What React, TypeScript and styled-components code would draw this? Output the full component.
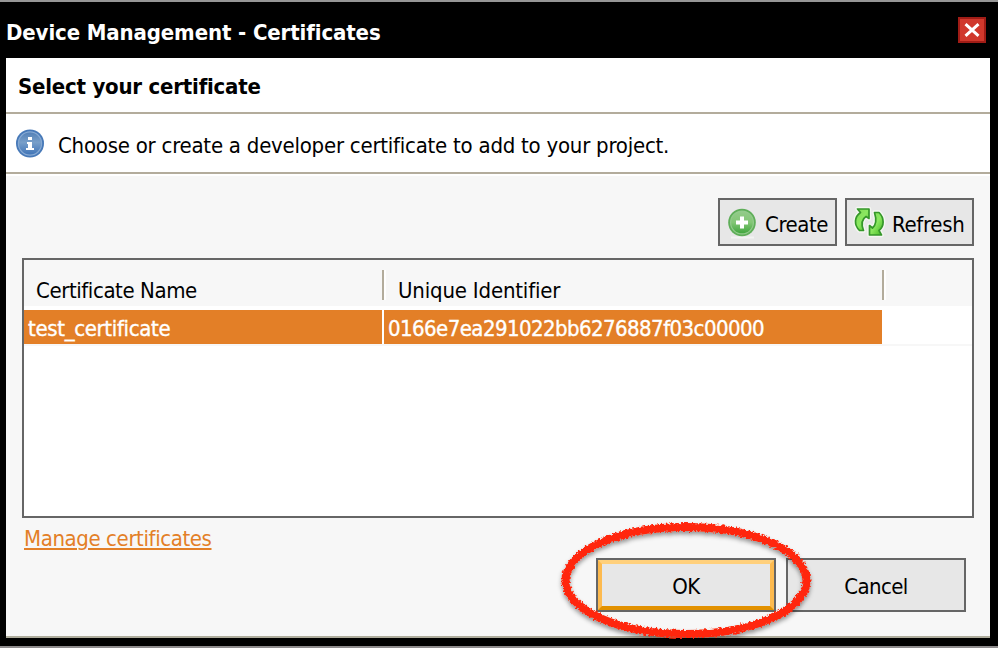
import React from "react";
import styled, { createGlobalStyle, css } from "styled-components";

const GlobalStyle = createGlobalStyle`
  * { box-sizing: border-box; }
  body { margin: 0; background: #000; }
`;

const Window = styled.div`
  position: relative;
  display: flex;
  flex-direction: column;
  width: 998px;
  height: 648px;
  background: #000;
  border-top: 2px solid #969696;
  border-bottom: 2px solid #8e8b8c;
  padding: 0 8px 8px 6px;
  font-family: "DejaVu Sans Condensed", "DejaVu Sans", sans-serif;
  font-stretch: condensed;
  font-size: 22px;
  line-height: 26px;
  color: #000;
  overflow: hidden;
`;

const Label = styled.span<{ $track?: number }>`
  white-space: nowrap;
  letter-spacing: ${(p) => p.$track ?? -0.6}px;
`;

const TitleBar = styled.header`
  display: flex;
  justify-content: space-between;
  height: 56px;
  padding: 18px 0 0;
  color: #fff;
  font-weight: 700;
`;

const CloseButton = styled.button`
  display: flex;
  align-items: center;
  justify-content: center;
  width: 28px;
  height: 26px;
  margin: -3px 4px 0 0;
  padding: 0;
  border: 2px solid #a01c16;
  background: #d0382c;
`;

const Panel = styled.main`
  display: flex;
  flex-direction: column;
  height: 580px;
  background: #f7f7f7;
  border-bottom: 2px solid #aeac9c;
`;

const Heading = styled.h1`
  height: 56px;
  margin: 0;
  padding: 16px 12px 0;
  font-size: 22px;
  font-weight: 700;
  background: #fff;
  border-bottom: 2px solid #b3ac9c;
`;

const Notice = styled.div`
  display: flex;
  height: 60px;
  padding: 15px 10px 0;
  gap: 14px;
  background: #fff;
  border-bottom: 2px solid #b3ac9c;

  span { padding-top: 4px; }
`;

const Content = styled.section`
  display: flex;
  flex-direction: column;
  flex: 1;
  border-top: 2px solid #fff;
  padding: 22px 16px 0;
`;

const Toolbar = styled.div`
  display: flex;
  justify-content: flex-end;
  gap: 8px;
  height: 48px;
`;

const buttonBase = css`
  display: flex;
  padding: 0;
  border: 2px solid #666;
  background: #e7e7e7;
  color: #000;
  font: inherit;
`;

const ToolButton = styled.button<{ $width: number }>`
  ${buttonBase}
  width: ${(p) => p.$width}px;
  padding: 8px 0 0 8px;
  gap: 8px;

  svg { flex: none; }
  span { padding-top: 4px; }
`;

const Table = styled.div`
  height: 260px;
  margin-top: 12px;
  border: 2px solid #666;
  background: #fff;
`;

const columns = css`
  display: grid;
  grid-template-columns: 360px 500px 1fr;
`;

const TableHead = styled.div`
  ${columns}
  height: 46px;
  padding-top: 10px;
  background: #f7f7f7;
`;

const HeadCell = styled.div`
  height: 30px;
  padding: 8px 0 0 12px;
  border-right: 2px solid #b3ac9c;
  box-shadow: 2px 0 0 #fff;

  & + & { padding-left: 14px; }
`;

const TableRow = styled.div`
  ${columns}
  height: 40px;
  padding-top: 4px;
  border-bottom: 2px solid #f7f7f7;
  color: #fff;
`;

const Cell = styled.div`
  height: 34px;
  padding: 6px 0 0 4px;
  margin-right: 2px;
  background: #e37f27;
  -webkit-text-stroke: 0.35px #fff;

  & + & { margin-right: 2px; }
`;

const ManageLink = styled.a`
  align-self: flex-start;
  height: 26px;
  margin: 8px 0 0 2px;
  color: #e37f27;
  text-decoration: underline;
  text-decoration-thickness: 1.5px;
  text-underline-offset: 2px;
  text-decoration-skip-ink: auto;
`;

const Footer = styled.footer`
  display: flex;
  justify-content: flex-end;
  gap: 10px;
  margin: 6px 8px 0 0;
`;

const DialogButton = styled.button<{ $primary?: boolean }>`
  ${buttonBase}
  width: 180px;
  height: 54px;
  justify-content: center;
  align-items: center;

  ${(p) =>
    p.$primary &&
    css`
      > div {
        border: 4px solid;
        border-color: #ffd07c #fdba4f #e29100 #fdba4f;
      }
    `}
`;

const ButtonFace = styled.div`
  display: flex;
  align-items: center;
  justify-content: center;
  width: 176px;
  height: 50px;
  padding-top: 4px;
`;

const Marker = styled.svg`
  position: absolute;
  left: 548px;
  top: 506px;
  pointer-events: none;
`;

const InfoIcon = () => (
  <svg width="28" height="30" viewBox="0 0 28 30">
    <defs>
      <linearGradient id="info" x2="0" y2="1">
        <stop stopColor="#527fb6" />
        <stop offset=".45" stopColor="#789fc9" />
        <stop offset="1" stopColor="#3e73b7" />
      </linearGradient>
    </defs>
    <circle cx="14" cy="14.5" r="14" fill="#4779b8" />
    <circle cx="14" cy="14.5" r="11.6" fill="url(#info)" stroke="#86a9d3" strokeWidth="1.2" />
    <path d="M12 8h4v3h-4zM11 13h5v6h2v2h-8v-2h2v-4h-1z" fill="#fff" />
  </svg>
);

const CreateIcon = () => (
  <svg width="29" height="31" viewBox="0 0 29 31">
    <defs>
      <linearGradient id="plus" x2="0" y2="1">
        <stop stopColor="#94cb8a" />
        <stop offset=".5" stopColor="#82c675" />
        <stop offset="1" stopColor="#3da43b" />
      </linearGradient>
    </defs>
    <path d="M3 29.5h23" stroke="#f3f3f3" strokeWidth="2" />
    <circle cx="14" cy="14.5" r="13.8" fill="#5fae59" />
    <circle cx="14" cy="14.5" r="11.4" fill="url(#plus)" stroke="#93cb8c" strokeWidth="1.2" />
    <path d="M14 8.500v12M8 14.500h12" stroke="#fff" strokeWidth="4" />
  </svg>
);

const LEFT_ARROW =
  "M2.500 1H14V10.500L11 8.500C7 11 6 16 8.500 22.500H4.500C-1 17-1 9 5.500 4.500Z";
const RIGHT_ARROW =
  "M19.500 4.500H24C29.500 10 29.500 18 24 22.500L26.500 27H14.500V17.500L17.500 20C21 17 21.500 11 19.500 4.500Z";

const RefreshIcon = () => (
  <svg width="29" height="30" viewBox="0 0 29 30" overflow="visible">
    <defs>
      <linearGradient id="cycle" x2="1" y2="1">
        <stop stopColor="#7fd957" />
        <stop offset=".5" stopColor="#8be860" />
        <stop offset="1" stopColor="#3fb41c" />
      </linearGradient>
    </defs>
    <g stroke="#f4f7f1" strokeWidth="4.500" strokeLinejoin="round">
      <path d={LEFT_ARROW} />
      <path d={RIGHT_ARROW} />
    </g>
    <g fill="url(#cycle)" stroke="#35972a" strokeWidth="1.700" strokeLinejoin="round">
      <path d={LEFT_ARROW} />
      <path d={RIGHT_ARROW} />
    </g>
  </svg>
);

export default function App() {
  return (
    <>
      <GlobalStyle />
      <Window>
        <TitleBar>
          <Label $track={-0.12}>Device Management - Certificates</Label>
          <CloseButton aria-label="Close">
            <svg width="18" height="16" viewBox="0 0 18 16">
              <path d="M2.500 2.200l13 11.600M15.500 2.200l-13 11.600" stroke="#fff" strokeWidth="3" />
            </svg>
          </CloseButton>
        </TitleBar>
        <Panel>
          <Heading><Label $track={-0.22}>Select your certificate</Label></Heading>
          <Notice>
            <InfoIcon />
            <Label $track={-0.24}>Choose or create a developer certificate to add to your project.</Label>
          </Notice>
          <Content>
            <Toolbar>
              <ToolButton $width={119}><CreateIcon /><Label $track={-0.45}>Create</Label></ToolButton>
              <ToolButton $width={129}><RefreshIcon /><Label $track={-0.3}>Refresh</Label></ToolButton>
            </Toolbar>
            <Table>
              <TableHead>
                <HeadCell><Label $track={-0.42}>Certificate Name</Label></HeadCell>
                <HeadCell><Label $track={-0.18}>Unique Identifier</Label></HeadCell>
              </TableHead>
              <TableRow>
                <Cell><Label $track={-0.34}>test_certificate</Label></Cell>
                <Cell><Label $track={-0.57}>0166e7ea291022bb6276887f03c00000</Label></Cell>
              </TableRow>
            </Table>
            <ManageLink href="#"><Label $track={-0.4}>Manage certificates</Label></ManageLink>
            <Footer>
              <DialogButton $primary><ButtonFace><Label>OK</Label></ButtonFace></DialogButton>
              <DialogButton><ButtonFace><Label>Cancel</Label></ButtonFace></DialogButton>
            </Footer>
          </Content>
        </Panel>
        <Marker width="280" height="140" viewBox="548 508 280 140">
          <defs>
            <filter id="crayon" x="-10%" y="-10%" width="120%" height="125%">
              <feTurbulence type="fractalNoise" baseFrequency=".45" numOctaves="2" seed="4" result="noise" />
              <feDisplacementMap in="SourceGraphic" in2="noise" scale="5" xChannelSelector="R" yChannelSelector="G" result="rough" />
              <feDropShadow in="rough" dx="0" dy="3" stdDeviation="2" floodColor="#000" floodOpacity=".4" />
            </filter>
          </defs>
          <ellipse cx="686" cy="580.500" rx="120.500" ry="53.500" fill="none" stroke="#ff260a" strokeWidth="8" filter="url(#crayon)" />
        </Marker>
      </Window>
    </>
  );
}
